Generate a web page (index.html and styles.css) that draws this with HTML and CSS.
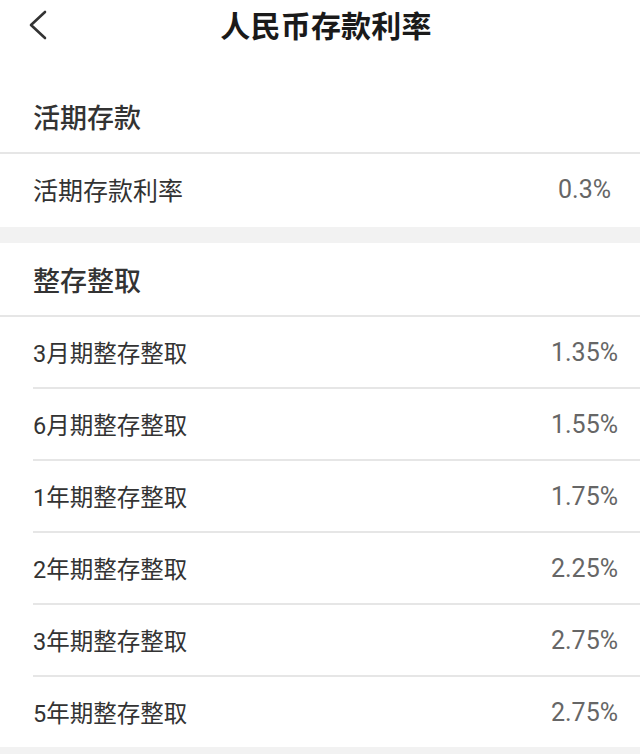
FILE: index.html
```html
<!DOCTYPE html>
<html lang="zh-CN">
<head>
<meta charset="utf-8">
<title>人民币存款利率</title>
<link rel="stylesheet" href="styles.css">
</head>
<body>
<header class="nav">
  <div class="nav-bar">
    <span class="back" aria-label="返回">
      <svg width="22" height="30" viewBox="0 0 22 30"><path d="M18 2 L4 15 L18 28" fill="none" stroke="#333" stroke-width="2.6" stroke-linecap="round" stroke-linejoin="round"/></svg>
    </span>
    <h1 class="title">人民币存款利率</h1>
  </div>
</header>
<main>
  <section class="group first">
    <div class="group-title">活期存款</div>
    <div class="row r1"><span class="label">活期存款利率</span><span class="value">0.3%</span></div>
  </section>
  <div class="gap"></div>
  <section class="group">
    <div class="group-title">整存整取</div>
    <div class="row"><span class="label">3月期整存整取</span><span class="value">1.35%</span></div>
    <div class="row"><span class="label">6月期整存整取</span><span class="value">1.55%</span></div>
    <div class="row"><span class="label">1年期整存整取</span><span class="value">1.75%</span></div>
    <div class="row"><span class="label">2年期整存整取</span><span class="value">2.25%</span></div>
    <div class="row"><span class="label">3年期整存整取</span><span class="value">2.75%</span></div>
    <div class="row"><span class="label">5年期整存整取</span><span class="value">2.75%</span></div>
  </section>
  <div class="gap"></div>
</main>
</body>
</html>
```
FILE: styles.css
```css
html, body {
  margin: 0;
  padding: 0;
  background: #fff;
  font-family: Roboto, "Noto Sans CJK SC", sans-serif;
  color: #333;
}
.nav {
  height: 80px;
}
.nav-bar {
  height: 54px;
  display: flex;
  align-items: center;
  justify-content: center;
  position: relative;
}
.back {
  position: absolute;
  left: 27px;
  top: 10px;
  width: 22px;
  height: 30px;
}
.back svg { display: block; }
.title {
  margin: 0 0 0 12px;
  font-size: 30px;
  font-weight: 700;
  color: #1a1a1a;
  line-height: 54px;
  letter-spacing: 0.2px;
}
.group-title {
  height: 72px;
  display: flex;
  align-items: center;
  padding-left: 33px;
  font-size: 27px;
  font-weight: 500;
  color: #333;
  border-bottom: 2px solid #e6e6e6;
}
.row {
  height: 70px;
  display: flex;
  align-items: center;
  justify-content: space-between;
  padding: 0 22px 0 0;
  margin-left: 33px;
}
.row + .row {
  border-top: 2px solid #e6e6e6;
}
.row.r1 {
  height: 70px;
  padding: 0 29px 3px 0;
}
.label {
  font-size: 23.5px;
  color: #333;
  font-weight: 400;
}
.r1 .label {
  font-size: 25px;
}
.value {
  font-size: 25px;
  color: #666;
  font-weight: 400;
}
.gap {
  height: 16px;
  background: #f2f2f2;
}
```
